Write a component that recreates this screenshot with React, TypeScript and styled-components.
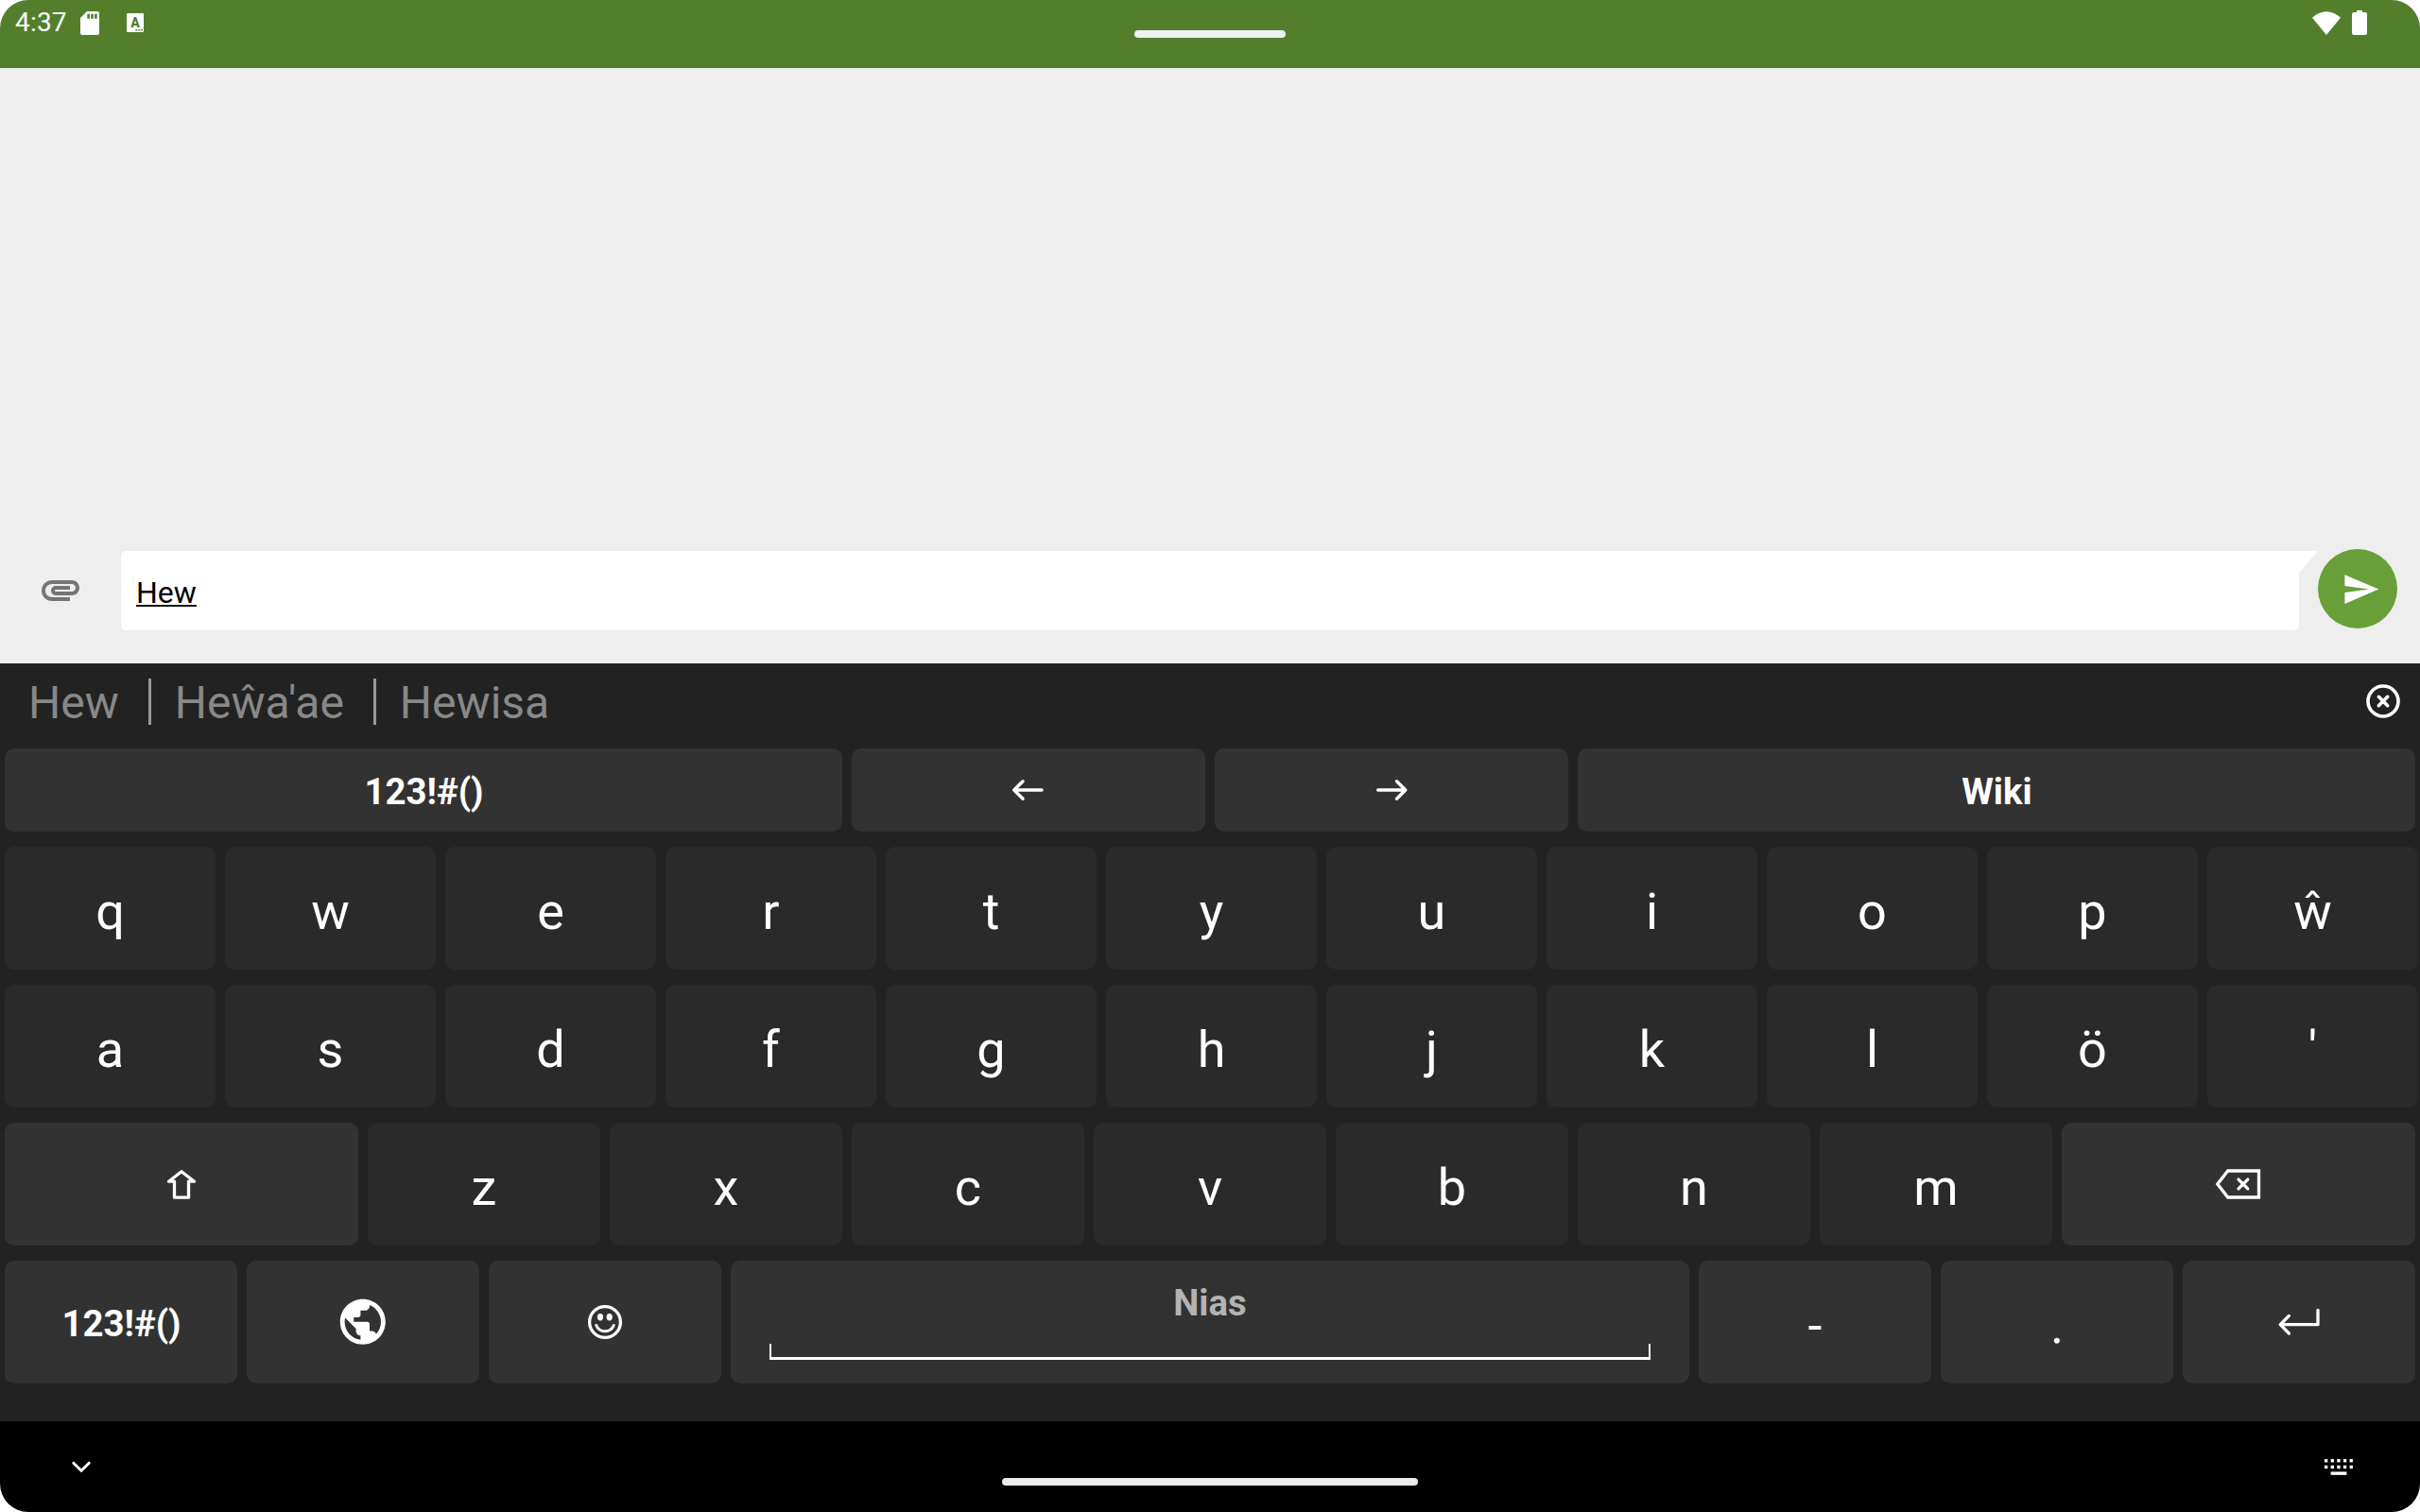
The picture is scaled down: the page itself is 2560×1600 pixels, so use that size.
import React from "react";
import styled, { createGlobalStyle } from "styled-components";
import { MdAttachment, MdPublic, MdSend } from "react-icons/md";

const GlobalStyle = createGlobalStyle`
  * { box-sizing: border-box; }
  body { margin: 0; background: #fff; }
`;

const Screen = styled.div`
  width: 2560px;
  height: 1600px;
  display: flex;
  flex-direction: column;
  overflow: hidden;
  border-radius: 30px;
  font-family: Roboto, "Noto Sans", sans-serif;
`;

const StatusBar = styled.header`
  height: 72px;
  display: grid;
  grid-template-columns: 1fr 160px 1fr;
  align-items: start;
  background: #537f2c;
  color: #fff;
`;

const StatusGroup = styled.div<{ $end?: boolean }>`
  height: 48px;
  display: flex;
  align-items: center;
  justify-content: ${(p) => (p.$end ? "flex-end" : "flex-start")};
  padding: ${(p) => (p.$end ? "0 56px 0 0" : "0 0 0 16px")};
`;

const Clock = styled.span`
  width: 69px;
  font-size: 28px;
  line-height: 32px;
  letter-spacing: 0.2px;
`;

const Glyph = styled.svg<{ $gap?: number }>`
  display: block;
  flex: none;
  margin-left: ${(p) => p.$gap ?? 0}px;
  fill: none;
  stroke: #fff;
  stroke-linecap: round;
  stroke-linejoin: round;
  overflow: visible;
`;

const Solid = styled(Glyph)`
  fill: currentColor;
  stroke: none;
`;

const Pill = styled.div<{ $w: number; $top: number; $color: string }>`
  width: ${(p) => p.$w}px;
  height: 8px;
  margin-top: ${(p) => p.$top}px;
  border-radius: 4px;
  background: ${(p) => p.$color};
`;

const Conversation = styled.main`
  height: 630px;
  display: flex;
  flex-direction: column;
  justify-content: flex-end;
  padding-bottom: 35px;
  background: #eee;
`;

const Composer = styled.div`
  height: 86px;
  display: flex;
  align-items: flex-start;
`;

const AttachButton = styled.div`
  width: 128px;
  padding: 19px 0 0 40px;
  color: #757575;
  svg { display: block; }
`;

const Field = styled.div`
  flex: 1;
  height: 84px;
  margin-top: 2px;
  padding: 23px 16px 0;
  border-radius: 5px 0 5px 5px;
  background: #fff;
  color: #000;
  font-size: 32px;
  line-height: 42px;
`;

const Composing = styled.span`
  display: inline-block;
  height: 36px;
  border-bottom: 2px solid #111;
`;

const Tail = styled(Solid)`
  margin-top: 2px;
  color: #fff;
`;

const SendButton = styled.div`
  width: 84px;
  height: 84px;
  margin-right: 24px;
  padding: 21.6px 0 0 24.6px;
  border-radius: 50%;
  background: #689f38;
  color: #fff;
  svg { display: block; }
`;

const Keyboard = styled.section`
  height: 802px;
  background: #222;
  overflow: hidden;
`;

const Suggestions = styled.div`
  height: 82px;
  display: flex;
  align-items: flex-start;
  padding: 15px 21px 0 30px;
`;

const Suggestion = styled.span`
  font-size: 48px;
  line-height: 54px;
  color: #888;
`;

const Divider = styled.i<{ $before: number; $after: number }>`
  width: 3px;
  height: 49px;
  margin: 1px ${(p) => p.$after}px 0 ${(p) => p.$before}px;
  background: #989898;
`;

const CloseWrap = styled.div`
  margin: 7px 0 0 auto;
`;

const KeyRow = styled.div<{ $cols: string; $h?: number }>`
  display: grid;
  grid-template-columns: ${(p) => p.$cols};
  height: ${(p) => p.$h ?? 146}px;
`;

const Key = styled.div<{ $fn?: boolean; $label?: boolean }>`
  margin: 8px 5px;
  display: flex;
  align-items: center;
  justify-content: center;
  padding: ${(p) => (p.$label ? "3px 0 0 1px" : "0")};
  border-radius: 10px;
  background: ${(p) => (p.$fn ? "#323232" : "#2a2a2a")};
  color: #fff;
  font-size: ${(p) => (p.$label ? 38.4 : 54)}px;
  font-weight: ${(p) => (p.$label ? 700 : 400)};
  line-height: 64px;
`;

const Char = styled.span`
  margin-top: 8px;
`;

const SpaceKey = styled(Key)`
  flex-direction: column;
  justify-content: flex-start;
  align-items: stretch;
  padding: 13px 41px 0;
  text-align: center;
  font-size: 38.4px;
  font-weight: 700;
  color: #b3b3b3;
`;

const SpaceMark = styled.div`
  height: 17px;
  margin-top: 11px;
  border: solid #fff;
  border-width: 0 2px 3px;
`;

const NavBar = styled.footer`
  height: 96px;
  display: grid;
  grid-template-columns: 1fr 440px 1fr;
  background: #000;
  color: #fff;
`;

const NavSide = styled.div<{ $end?: boolean }>`
  display: flex;
  justify-content: ${(p) => (p.$end ? "flex-end" : "flex-start")};
  padding: ${(p) => (p.$end ? "39.5px 71px 0 0" : "42px 0 0 76px")};
`;

const letterCols = "repeat(11, 233px)";
const topRow = ["q", "w", "e", "r", "t", "y", "u", "i", "o", "p", "ŵ"];
const homeRow = ["a", "s", "d", "f", "g", "h", "j", "k", "l", "ö", "'"];
const lowRow = ["z", "x", "c", "v", "b", "n", "m"];

const letters = (chars: string[]) =>
  chars.map((c) => (
    <Key key={c}>
      <Char>{c}</Char>
    </Key>
  ));

export default function App() {
  return (
    <>
      <GlobalStyle />
      <Screen>
        <StatusBar>
          <StatusGroup>
            <Clock>4:37</Clock>
            <Solid width="20" height="25" viewBox="0 0 20 25">
              <path
                fillRule="evenodd"
                d="M7 0H18a2 2 0 0 1 2 2V23a2 2 0 0 1-2 2H2a2 2 0 0 1-2-2V7ZM7.3 2.7v5h2.6v-5zM11.2 2.7v5h2.6v-5zM15.1 2.7v5h2.6v-5z"
              />
            </Solid>
            <Solid $gap={29} width="18" height="20" viewBox="0 0 18 20">
              <rect width="18" height="20" rx="1" />
              <text x="9" y="14.8" fontSize="14" fontWeight="900" textAnchor="middle" fill="#537f2c">
                A
              </text>
              <path d="M9.3 17h2v1.6h-2zM12.4 17h2v1.6h-2zM15.2 17h1.8v1.6h-1.8z" fill="#537f2c" />
            </Solid>
          </StatusGroup>
          <Pill $w={160} $top={32} $color="#eff0f4" />
          <StatusGroup $end>
            <Solid width="30" height="25" viewBox="0 0 30 25">
              <path d="M0 6.8C8.5-2 21.5-2 30 6.8L15 25Z" />
            </Solid>
            <Solid $gap={12} width="16" height="26" viewBox="0 0 16 26">
              <path d="M5 0h6v2h3a2 2 0 0 1 2 2V24a2 2 0 0 1-2 2H2a2 2 0 0 1-2-2V4a2 2 0 0 1 2-2h3z" />
            </Solid>
          </StatusGroup>
        </StatusBar>

        <Conversation>
          <Composer>
            <AttachButton>
              <MdAttachment size={48} />
            </AttachButton>
            <Field>
              <Composing>Hew</Composing>
            </Field>
            <Tail width="20" height="23" viewBox="0 0 20 23">
              <path d="M0 0H20L0 23Z" />
            </Tail>
            <SendButton>
              <MdSend size={41} />
            </SendButton>
          </Composer>
        </Conversation>

        <Keyboard>
          <Suggestions>
            <Suggestion>Hew</Suggestion>
            <Divider $before={31} $after={25} />
            <Suggestion>Heŵa'ae</Suggestion>
            <Divider $before={31} $after={25} />
            <Suggestion>Hewisa</Suggestion>
            <CloseWrap>
              <Glyph width="36" height="36" viewBox="-18 -18 36 36" strokeWidth="3.6">
                <circle r="16" />
                <path d="M-4.7-4.7 4.7 4.7M4.7-4.7-4.7 4.7" />
              </Glyph>
            </CloseWrap>
          </Suggestions>

          <KeyRow $cols="35fr 15fr 15fr 35fr" $h={104}>
            <Key $fn $label>123!#()</Key>
            <Key $fn>
              <Glyph width="34" height="22" viewBox="0 0 34 22" strokeWidth="3.4">
                <path d="M11 1.8 1.7 11l9.3 9.2M1.7 11H31" />
              </Glyph>
            </Key>
            <Key $fn>
              <Glyph width="33" height="22" viewBox="0 0 33 22" strokeWidth="3.4">
                <path d="M21.5 1.8 30.8 11l-9.3 9.2M30.8 11H1.7" />
              </Glyph>
            </Key>
            <Key $fn $label>Wiki</Key>
          </KeyRow>

          <KeyRow $cols={letterCols}>{letters(topRow)}</KeyRow>
          <KeyRow $cols={letterCols}>{letters(homeRow)}</KeyRow>

          <KeyRow $cols="15fr repeat(7, 10fr) 15fr">
            <Key $fn>
              <Glyph width="32" height="32" viewBox="0 0 32 32" strokeWidth="3.3">
                <path d="M16 2.7 2.5 13.2h6V30.2h15v-17h6Z" />
              </Glyph>
            </Key>
            {letters(lowRow)}
            <Key $fn>
              <Glyph width="48" height="32" viewBox="0.5 0 48 32" strokeWidth="3.3">
                <path d="M2.3 16 13.2 2H46V30H13.2Z" strokeLinejoin="miter" />
                <path d="M24.5 11.1l9.8 9.8M34.3 11.1l-9.8 9.8" />
              </Glyph>
            </Key>
          </KeyRow>

          <KeyRow $cols="repeat(3, 10fr) 40fr repeat(3, 10fr)">
            <Key $fn $label>123!#()</Key>
            <Key $fn>
              <MdPublic size={57.6} />
            </Key>
            <Key $fn>
              <Glyph width="36" height="36" viewBox="-18 -18 36 36" strokeWidth="3.3">
                <circle r="16.4" />
                <path d="M-9.2 3.5C-6 11.8 6 11.8 9.2 3.5" strokeWidth="3" />
                <g fill="#fff" stroke="none">
                  <ellipse cx="-5" cy="-5.2" rx="3.1" ry="3.7" />
                  <ellipse cx="4.7" cy="-5.2" rx="3.1" ry="3.7" />
                </g>
              </Glyph>
            </Key>
            <SpaceKey $fn>
              Nias
              <SpaceMark />
            </SpaceKey>
            <Key $fn>
              <Char>-</Char>
            </Key>
            <Key $fn>
              <Char>.</Char>
            </Key>
            <Key $fn>
              <Glyph width="44" height="28" viewBox="0 0 44 28" strokeWidth="3.3">
                <path d="M42 1.5V16.7H2.2M11.4 7.4 2.2 16.7l9.2 9.3" />
              </Glyph>
            </Key>
          </KeyRow>
        </Keyboard>

        <NavBar>
          <NavSide>
            <Glyph width="20" height="13" viewBox="0 0 20 13" strokeWidth="3" strokeLinejoin="miter">
              <path d="M1.8 2.2 10 10.3 18.2 2.2" />
            </Glyph>
          </NavSide>
          <Pill $w={440} $top={60} $color="#ebebeb" />
          <NavSide $end>
            <Solid width="30" height="17" viewBox="0 0 30 17">
              {[0, 1, 2, 3, 4].map((i) => (
                <React.Fragment key={i}>
                  <rect x={i * 6.65} y="0" width="3.3" height="3.4" />
                  <rect x={i * 6.65} y="6.7" width="3.3" height="3.4" />
                </React.Fragment>
              ))}
              <rect x="6.6" y="13.4" width="16.8" height="3.4" />
            </Solid>
          </NavSide>
        </NavBar>
      </Screen>
    </>
  );
}
